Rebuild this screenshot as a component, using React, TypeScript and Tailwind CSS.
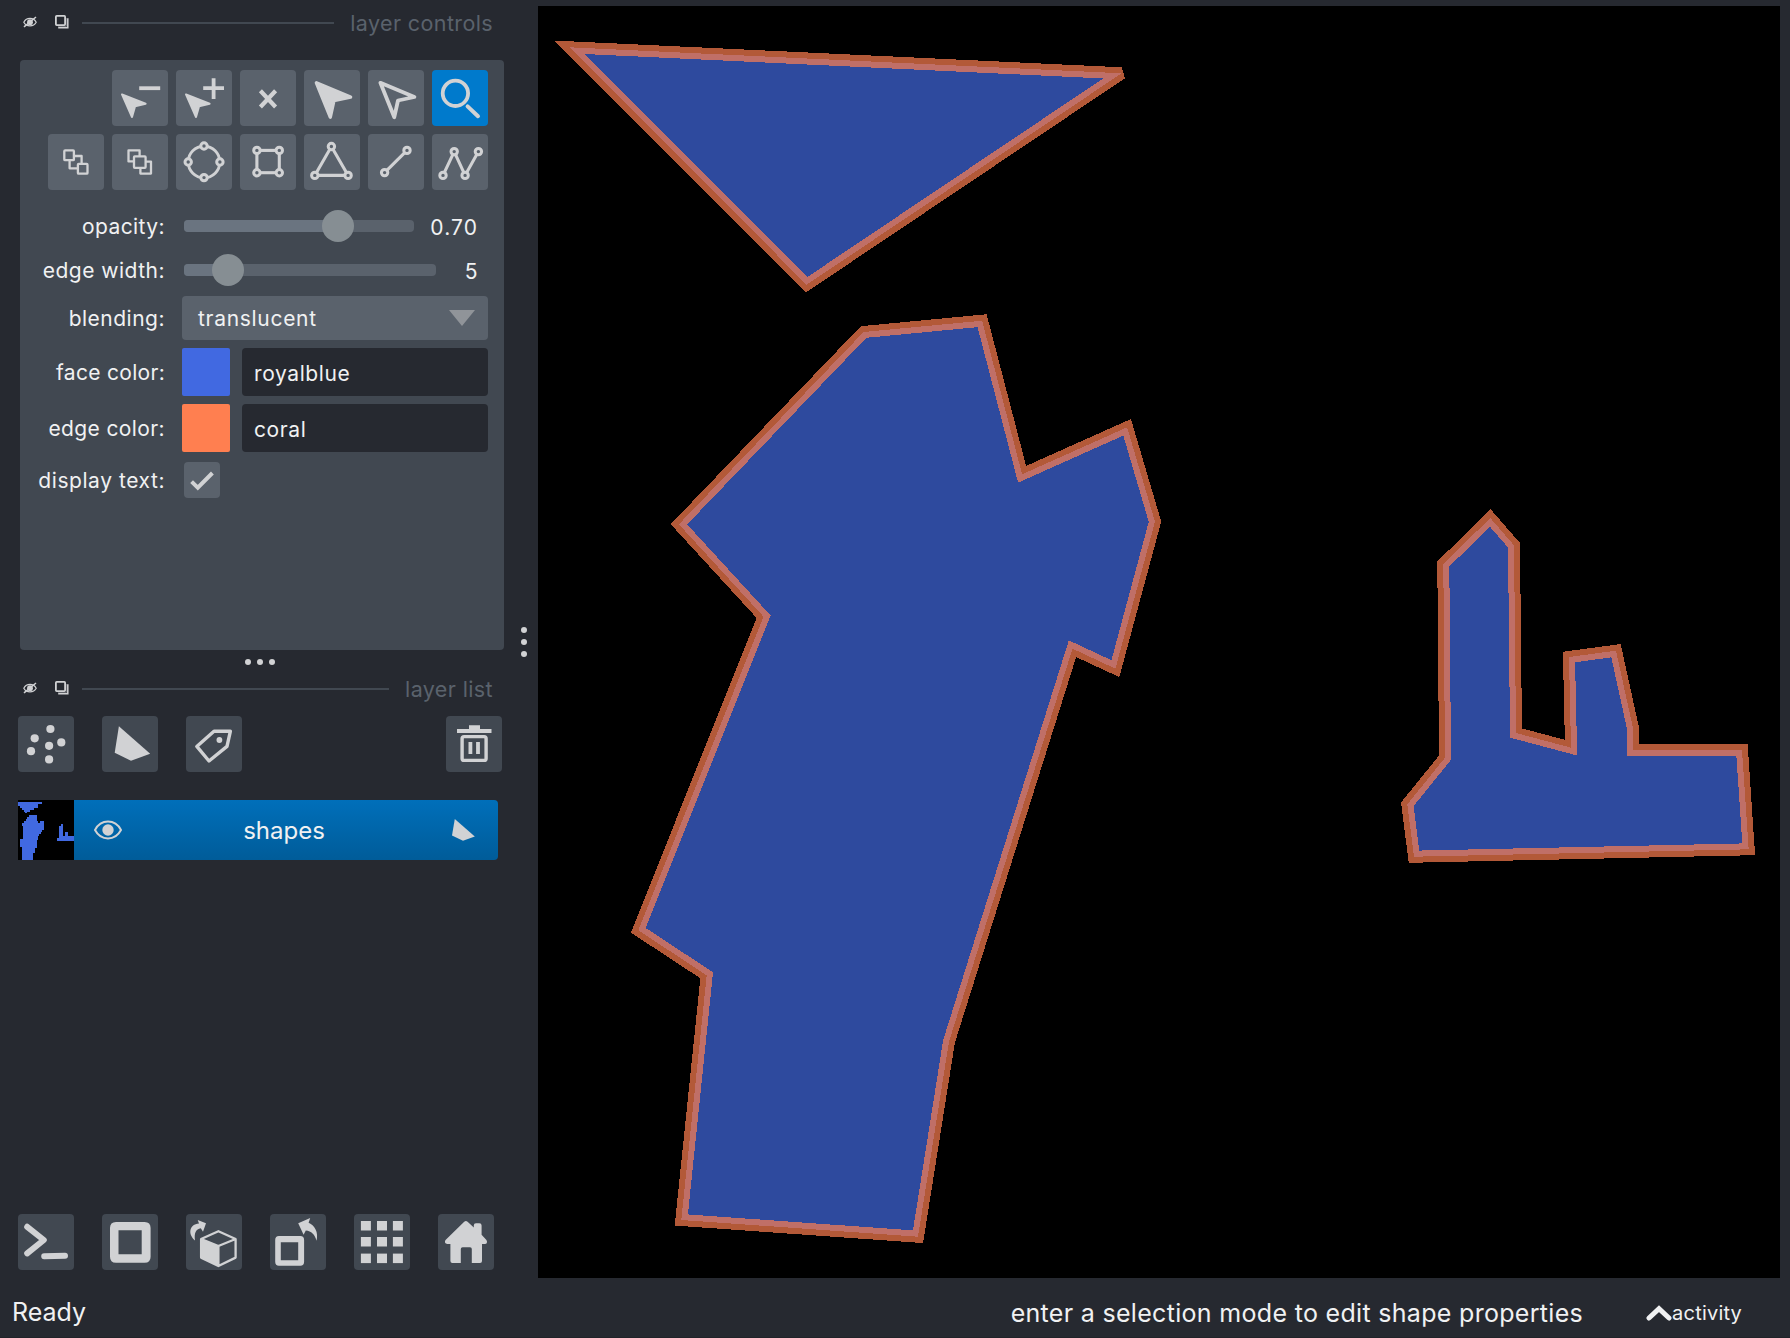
import React from "react";

const LIGHT = "#d1d2d4";

function Svg({ children, size = 56 }: { children: React.ReactNode; size?: number }) {
  return (
    <svg width={size} height={size} viewBox={`0 0 ${size} ${size}`} fill="none" className="block shrink-0">
      {children}
    </svg>
  );
}

function Tool({ children, active = false }: { children: React.ReactNode; active?: boolean }) {
  return (
    <button className={`h-14 w-14 shrink-0 rounded-[4px] ${active ? "bg-[#007acc]" : "bg-[#5a626c]"}`}>
      <Svg>{children}</Svg>
    </button>
  );
}

function DarkTool({ children }: { children: React.ReactNode }) {
  return (
    <button className="h-14 w-14 shrink-0 rounded-[4px] bg-[#414851]">
      <Svg>{children}</Svg>
    </button>
  );
}

function Nodes({ points }: { points: number[][] }) {
  return (
    <>
      {points.map(([x, y]) => (
        <circle key={`${x}-${y}`} cx={x} cy={y} r={3.2} fill="#5a626c" stroke={LIGHT} strokeWidth={3} />
      ))}
    </>
  );
}

function DockHeader({ title }: { title: string }) {
  return (
    <div className="flex h-[30px] items-center pl-[23px] pr-[45px]">
      <svg width="14" height="12" viewBox="0 0 14 12" fill="none" className="shrink-0">
        <path d="M0.8 6.2C3.5 1.2 10.5 1.2 13.2 6.2C10.5 11 3.5 11 0.8 6.2Z" stroke={LIGHT} strokeWidth="1.2" />
        <circle cx="7" cy="6.2" r="2.9" fill={LIGHT} />
        <path d="M1 10.8L13 1" stroke={LIGHT} strokeWidth="1.5" />
      </svg>
      <svg width="14" height="14" viewBox="0 0 14 14" fill="none" className="ml-[18px] shrink-0">
        <rect x="0.9" y="0.9" width="9.2" height="9.2" rx="0.8" stroke={LIGHT} strokeWidth="1.8" />
        <path d="M12.8 3.2V12.8H3.2" stroke={LIGHT} strokeWidth="1.5" />
        <path d="M11.4 3V11.4H3" stroke={LIGHT} strokeWidth="0.4" />
      </svg>
      <div className="ml-[13px] mt-[2px] h-[2px] flex-1 bg-[#414851]" />
      <div className="ml-[16px] mt-px text-[21.5px] leading-[26px] tracking-[0.38px] text-[#5a626c]">{title}</div>
    </div>
  );
}

function Row({ label, className, children }: { label: string; className: string; children: React.ReactNode }) {
  return (
    <div className={`flex items-center ${className}`}>
      <div className="w-[145px] shrink-0 pt-[2px] text-right text-[21px] leading-[26px]">{label}</div>
      {children}
    </div>
  );
}

function Slider({ width, fill }: { width: string; fill: string }) {
  return (
    <div className={`relative ml-[19px] h-8 ${width}`}>
      <div className="absolute inset-x-0 top-[10px] h-3 rounded-[4px] bg-[#5a626c]" />
      <div className={`absolute left-0 top-[10px] h-3 rounded-[4px] bg-[#6a7480] ${fill}`}>
        <div className="absolute -right-4 -top-[10px] h-8 w-8 rounded-full bg-[#868e93]" />
      </div>
    </div>
  );
}

function ColorField({ swatch, name }: { swatch: string; name: string }) {
  return (
    <>
      <div className={`ml-[17px] h-12 w-12 rounded-[2px] ${swatch}`} />
      <div className="ml-3 flex h-12 w-[246px] items-center rounded-[4px] bg-[#262930] pl-3 pt-[4px] text-[21px] tracking-[0.6px]">
        {name}
      </div>
    </>
  );
}

function Dot() {
  return <i className="h-[6px] w-[6px] shrink-0 rounded-full bg-[#d1d2d4]" />;
}

function Thumbnail() {
  const runs = [
    [52, 516, 122, 522], [52, 522, 110, 528], [58, 528, 110, 534], [64, 534, 98, 540], [70, 540, 87, 545], [73, 545, 78, 549],
    [84, 555, 107, 561], [78, 561, 107, 567], [76, 567, 107, 573], [70, 573, 110, 579], [116, 573, 128, 579], [64, 579, 128, 588],
    [67, 588, 128, 600], [67, 600, 122, 606], [67, 606, 119, 612], [67, 612, 113, 618], [67, 618, 110, 627], [58, 627, 110, 630],
    [58, 630, 107, 651], [64, 651, 107, 654], [64, 654, 102, 669], [64, 669, 96, 690],
    [177, 582, 183, 588], [172, 588, 183, 618], [189, 606, 197, 618], [172, 618, 215, 626], [166, 624, 215, 633],
  ];
  return (
    <svg width="56" height="60" viewBox="52 510 163 180" preserveAspectRatio="none" shapeRendering="crispEdges" className="block shrink-0 bg-black">
      {runs.map(([a, b, c, d]) => (
        <rect key={`${a}-${b}`} x={a} y={b} width={c - a} height={d - b} fill="#4169e1" />
      ))}
    </svg>
  );
}

const SHAPES = [
  "569.5,47.3 1121.6,73.3 806.7,284.7",
  "863.6,332 982.1,320.7 1022.1,474.3 1127.1,427.3 1155,521.7 1115.4,668.7 1072.5,648.7 949,1041.5 918,1236.7 681.3,1220 706.7,975.3 638.3,930.3 763.6,616.7 678.9,524.3",
  "1490.3,518 1514,545.3 1516,733 1571,747.7 1569,657 1616,650.7 1633,728.3 1633,750 1742,750 1748.7,849.3 1414,856.7 1407.3,804.3 1445,757.7 1443.3,564",
];

function Canvas() {
  return (
    <svg width="1242" height="1272" viewBox="538 6 1242 1272" shapeRendering="crispEdges" className="block shrink-0 bg-black">
      {SHAPES.map((p) => (
        <polygon key={p} points={p} fill="#4169e1" fillOpacity={0.7} stroke="#ff7f50" strokeOpacity={0.7} strokeWidth={12} strokeMiterlimit={3} />
      ))}
    </svg>
  );
}

export default function App() {
  return (
    <div className="flex h-[1338px] w-[1790px] flex-col overflow-hidden border-b border-[#212329] bg-[#262930] font-['Inter',sans-serif] text-[#f0f1f2]">
      <div className="flex h-[1278px] shrink-0">
        <aside className="flex w-[538px] shrink-0 flex-col">
          <div className="pt-[7px]">
            <DockHeader title="layer controls" />
          </div>

          <div className="flex h-[613px] shrink-0">
            <div className="w-[504px] pl-5 pt-[23px]">
              <section className="h-[590px] rounded-[4px] bg-[#414851] pt-[10px]">
                <div className="flex justify-end gap-2 pr-4">
                  <Tool>
                    <path d="M27.2 18.2H48.2" stroke={LIGHT} strokeWidth="3.8" />
                    <path d="M10 24.4L33.6 33.7L23 36.4L20 47Z" fill={LIGHT} stroke={LIGHT} strokeWidth="2" strokeLinejoin="round" />
                  </Tool>
                  <Tool>
                    <path d="M27.2 18.2H48M37.6 8.3V29" stroke={LIGHT} strokeWidth="3.8" />
                    <path d="M10 24.4L33.6 33.7L23 36.4L20 47Z" fill={LIGHT} stroke={LIGHT} strokeWidth="2" strokeLinejoin="round" />
                  </Tool>
                  <Tool>
                    <path d="M20.4 20.8L35.6 37M35.6 20.8L20.4 37" stroke={LIGHT} strokeWidth="4.2" />
                  </Tool>
                  <Tool>
                    <path d="M12.4 12.8L46.6 27L30 30.5L26.3 47.2Z" fill={LIGHT} stroke={LIGHT} strokeWidth="3.4" strokeLinejoin="round" />
                  </Tool>
                  <Tool>
                    <path d="M12.4 12.8L46.4 27L30 30.5L26.3 47.2Z" stroke={LIGHT} strokeWidth="3.8" strokeLinejoin="round" />
                  </Tool>
                  <Tool active>
                    <circle cx="23.4" cy="23.3" r="12.7" stroke={LIGHT} strokeWidth="3.8" />
                    <path d="M35.6 36.4L46 46.2" stroke={LIGHT} strokeWidth="4" strokeLinecap="round" />
                  </Tool>
                </div>
                <div className="mt-2 flex justify-end gap-2 pr-4">
                  <Tool>
                    <g stroke={LIGHT} strokeWidth="2.3" strokeLinejoin="round">
                      <rect x="16.3" y="16.4" width="9.6" height="9.8" rx="0.8" />
                      <rect x="29.9" y="29.9" width="9.6" height="9.8" rx="0.8" />
                      <path d="M26 22H33.6V29.5M21.6 26.4V34.3H29.6" />
                    </g>
                  </Tool>
                  <Tool>
                    <g stroke={LIGHT} strokeWidth="2.3" strokeLinejoin="round">
                      <rect x="22" y="22.4" width="11.6" height="11.4" rx="0.8" />
                      <path d="M22 27.4H16.5V16.4H27.6V22.4" />
                      <path d="M33.6 27.6H39V39.6H28.4V33.8" />
                    </g>
                  </Tool>
                  <Tool>
                    <circle cx="28" cy="28" r="15.8" stroke={LIGHT} strokeWidth="2.9" />
                    <Nodes points={[[28, 12], [43.9, 28], [28, 43.6], [12.2, 28]]} />
                  </Tool>
                  <Tool>
                    <rect x="16.9" y="16.4" width="22.4" height="22.3" stroke={LIGHT} strokeWidth="3.1" />
                    <Nodes points={[[16.9, 16.4], [39.3, 16.4], [39.3, 38.7], [16.9, 38.7]]} />
                  </Tool>
                  <Tool>
                    <path d="M27.4 12.5L44.1 41.4H10.8Z" stroke={LIGHT} strokeWidth="3.1" />
                    <Nodes points={[[27.4, 12.5], [44.1, 41.4], [10.8, 41.4]]} />
                  </Tool>
                  <Tool>
                    <path d="M39 16.4L16.6 38.6" stroke={LIGHT} strokeWidth="3.1" />
                    <Nodes points={[[39, 16.4], [16.6, 38.6]]} />
                  </Tool>
                  <Tool>
                    <path d="M11 41.4L22.2 17.6L33.1 41.4L46.4 17.6" stroke={LIGHT} strokeWidth="3.1" />
                    <Nodes points={[[11, 41.4], [22.2, 17.6], [33.1, 41.4], [46.4, 17.6]]} />
                  </Tool>
                </div>

                <div className="mt-[14px] flex flex-col">
                  <Row label="opacity:" className="h-11 tracking-[0.42px]">
                    <Slider width="w-[230px]" fill="w-[154px]" />
                    <div className="mr-[26px] flex-1 pt-[3px] text-right text-[21px] tracking-[1.1px]">0.70</div>
                  </Row>
                  <Row label="edge width:" className="h-11 tracking-[0.48px]">
                    <Slider width="w-[252px]" fill="w-[44px]" />
                    <div className="mr-[26px] flex-1 pt-[3px] text-right text-[21px]">5</div>
                  </Row>
                  <Row label="blending:" className="mt-1 h-11 tracking-[0.5px]">
                    <div className="ml-[17px] flex h-11 w-[306px] items-center justify-between rounded-[4px] bg-[#5a626c] pl-4 pr-[13px] text-[21px] tracking-[0.7px]">
                      <span className="pt-[2px]">translucent</span>
                      <svg width="26" height="16" viewBox="0 0 26 16">
                        <path d="M0 0H26L13 16Z" fill="#909499" />
                      </svg>
                    </div>
                  </Row>
                  <Row label="face color:" className="mt-2 h-12 tracking-[0.3px]">
                    <ColorField swatch="bg-[#4169e1]" name="royalblue" />
                  </Row>
                  <Row label="edge color:" className="mt-2 h-12 tracking-[0.38px]">
                    <ColorField swatch="bg-[#ff7f50]" name="coral" />
                  </Row>
                  <Row label="display text:" className="mt-[10px] h-9 tracking-[0.56px]">
                    <div className="ml-[19px] h-9 w-9 rounded-[4px] bg-[#5a626c]">
                      <Svg size={36}>
                        <path d="M7.6 19.6L13.8 25.6L28.4 11" stroke={LIGHT} strokeWidth="4" />
                      </Svg>
                    </div>
                  </Row>
                </div>
              </section>
            </div>
            <div className="flex w-[34px] flex-col items-end gap-[6px] pr-[11px] pt-[590px]">
              <Dot />
              <Dot />
              <Dot />
            </div>
          </div>

          <div className="flex gap-[6px] pl-[245px] pt-[9px]">
            <Dot />
            <Dot />
            <Dot />
          </div>

          <div className="pt-2">
            <DockHeader title="layer list" />
          </div>

          <div className="flex gap-7 pl-[18px] pr-9 pt-[13px]">
            <DarkTool>
              {[[32.4, 13], [16.7, 22.3], [43.3, 26.4], [31.1, 29.8], [13, 35.2], [31.1, 43.4]].map(([x, y]) => (
                <circle key={y} cx={x} cy={y} r="4.1" fill={LIGHT} />
              ))}
            </DarkTool>
            <DarkTool>
              <path d="M16.9 10.3L48.2 37.7L29 44.7L12.7 36.7Z" fill={LIGHT} />
            </DarkTool>
            <DarkTool>
              <path d="M28 15.2H44.4L41 30.4L23 45L10.8 30.4Z" stroke={LIGHT} strokeWidth="3.4" strokeLinejoin="round" />
              <circle cx="33.4" cy="24" r="2.9" fill={LIGHT} />
            </DarkTool>
            <div className="flex-1" />
            <DarkTool>
              <path d="M11 13H23V9.3H34V13H45.5V17H11Z" fill={LIGHT} />
              <rect x="16.1" y="20.6" width="24" height="23.8" rx="2" stroke={LIGHT} strokeWidth="3.4" />
              <path d="M24.4 26V38M32 26V38" stroke={LIGHT} strokeWidth="3.8" />
            </DarkTool>
          </div>

          <div className="mt-7 flex h-[60px] pl-[18px]">
            <Thumbnail />
            <div className="flex w-[424px] items-center rounded-r-[4px] bg-linear-to-b from-[#006fba] to-[#005c99]">
              <svg width="28" height="20" viewBox="0 0 28 20" fill="none" className="ml-5">
                <path d="M1 10C7 -1.2 21 -1.2 27 10C21 21.2 7 21.2 1 10Z" stroke={LIGHT} strokeWidth="2" />
                <circle cx="14" cy="10" r="5.7" fill={LIGHT} />
              </svg>
              <div className="flex-1 pr-[6px] pt-[2px] text-center text-[24px]">shapes</div>
              <svg width="23" height="22" viewBox="0 0 23 22" className="mr-[23px]">
                <path d="M2.8 0L22.8 17.4L11 21.8L0 16.4Z" fill={LIGHT} />
              </svg>
            </div>
          </div>

          <div className="mt-auto flex gap-7 pb-2 pl-[18px]">
            <DarkTool>
              <path d="M9.2 12.8L25.8 26L9.2 39.4" stroke={LIGHT} strokeWidth="6" strokeLinecap="round" strokeLinejoin="round" />
              <path d="M26.2 42.2L47 41.8" stroke={LIGHT} strokeWidth="6" strokeLinecap="round" />
            </DarkTool>
            <DarkTool>
              <path fillRule="evenodd" d="M14 8H42.6Q48.6 8 48.6 14V42.7Q48.6 48.7 42.6 48.7H14Q8 48.7 8 42.7V14Q8 8 14 8ZM16.5 16.3V40.3H39.7V16.3Z" fill={LIGHT} />
            </DarkTool>
            <DarkTool>
              <path d="M32.4 17.2L49.6 25V43.6L32.4 52L15.1 43.6V25ZM15.1 25L32.4 32L49.6 25M32.4 32V52" stroke={LIGHT} strokeWidth="2.3" strokeLinejoin="round" />
              <path d="M15.1 25L32.4 32V52L15.1 43.6Z" fill={LIGHT} />
              <path d="M11.7 6L20 9.3L17 17.8L14.8 14.2C9.8 15 8 19 9 26.4C1.6 20.4 3.2 10.4 13 9.6Z" fill={LIGHT} />
            </DarkTool>
            <DarkTool>
              <path fillRule="evenodd" d="M9 22H30.3Q34.1 22 34.1 26V47.8Q34.1 51.7 30.3 51.7H9Q5.2 51.7 5.2 47.8V26Q5.2 22 9 22ZM10.8 28.3V46.2H28.2V28.3Z" fill={LIGHT} />
              <path d="M40.2 4L28.2 9.3L33.6 20.8L35.8 16.4C41.5 17 44.6 20 46.6 26.8C48.6 18.4 45 11.6 38.6 8.8Z" fill={LIGHT} />
            </DarkTool>
            <DarkTool>
              {[7, 23, 39.6].map((y) =>
                [6.9, 23, 38.9].map((x) => <rect key={`${x}-${y}`} x={x} y={y} width="10" height="9.5" fill={LIGHT} />)
              )}
            </DarkTool>
            <DarkTool>
              <path d="M26.2 7.8Q27.9 6.2 29.6 7.8L35.8 13.6V11.5Q35.8 9.3 38 9.3H41.4Q43.6 9.3 43.6 11.5V20.8L48.4 26Q49.4 27.4 48.8 29Q48.4 30 46.8 30H44V47Q44 49 42 49H33.8V35Q33.8 33.2 32 33.2H24.6Q22.8 33.2 22.8 35V49H14.4Q12.4 49 12.4 47V30H9.4Q7.4 30 7 28.6Q6.6 27 7.8 25.8Z" fill={LIGHT} />
            </DarkTool>
          </div>
        </aside>

        <main className="pt-[6px]">
          <Canvas />
        </main>
      </div>

      <footer className="flex h-[59px] items-center pl-3 pr-[48px] pt-[11px]">
        <span className="text-[25px]">Ready</span>
        <span className="ml-auto pt-px text-[25px] tracking-[0.31px]">enter a selection mode to edit shape properties</span>
        <svg width="26" height="16" viewBox="0 0 26 16" fill="none" className="ml-[63px]">
          <path d="M3 13L13 3.6L23 13" stroke="#f0f1f2" strokeWidth="5" strokeLinecap="round" />
        </svg>
        <span className="text-[20px] tracking-[0.2px]">activity</span>
      </footer>
    </div>
  );
}
